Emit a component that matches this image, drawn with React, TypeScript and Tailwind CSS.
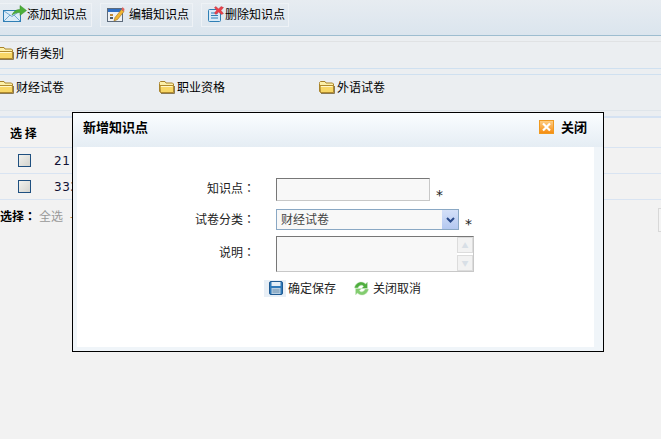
const cjk = "font-['Noto_Sans_CJK_SC',sans-serif]";
const colon = "font-['Noto_Sans_CJK_TC',sans-serif]";
const star = "ml-[6px] font-['DejaVu_Sans',sans-serif] text-[14px]";

const Folder = () => (
  <svg width="16" height="14" viewBox="0 0 16 14" className="mr-[2px] shrink-0">
    <path d="M0.5 3.5V2.5L1.5 1.5H6L7 3H13.5L14.5 4V12.5H1.5L0.5 11.5Z" fill="#fdf0a8" stroke="#a9832a" />
    <path d="M1 5.5H14.5V12.5H1.5Z" fill="#f8d766" stroke="#b08a2e" />
    <path d="M2 6.5H13.5" stroke="#fff6c8" />
    <path d="M2 13.5H15.5V6" fill="none" stroke="#8a7a55" />
  </svg>
);

const AddIcon = () => (
  <svg width="24" height="18" viewBox="0 0 24 18" className="shrink-0">
    <rect x="0.5" y="5.5" width="17" height="11" fill="#dcecf8" stroke="#2f7fb5" />
    <path d="M1 6L9 11.5L17 6M1 16L7 10M17 16L11 10" fill="none" stroke="#6fa8d0" />
    <path d="M9 10C11 5.5 14 4.5 17 4.5V0.5L23.5 5.5L17 10.5V7.5C14 7.5 12 8 9 10Z" fill="#4caf3a" stroke="#3a8f2c" strokeWidth="0.5" />
  </svg>
);

const EditIcon = () => (
  <svg width="18" height="17" viewBox="0 0 18 17" className="shrink-0">
    <rect x="0.5" y="2.5" width="15" height="13" fill="#eef1f4" stroke="#5d6b7c" />
    <rect x="1" y="3" width="14" height="3" fill="#2f6fc4" />
    <rect x="3" y="8" width="3" height="2" fill="#c08a3a" />
    <rect x="3" y="11" width="3" height="2" fill="#4a5a6a" />
    <path d="M7 15L8 11.5L14.5 3.5L17 5.5L10.5 13.5Z" fill="#f2b632" stroke="#9a6f1e" strokeWidth="0.6" />
    <path d="M14.5 3.5L15.5 1L17.5 3L17 5.5Z" fill="#e0645c" />
  </svg>
);

const DeleteIcon = () => (
  <svg width="17" height="17" viewBox="0 0 17 17" className="shrink-0">
    <rect x="0.5" y="3.5" width="12" height="12" rx="1" fill="#d8ebf8" stroke="#2f7fb5" />
    <path d="M3 7H10M3 9.5H10M3 12H10" stroke="#2f7fb5" />
    <path d="M6.5 1.5L8 0.5L10.5 3L13 0.5L15.5 1.5L13 4.5L15.5 7.5L13.5 8.5L10.5 6L8 8.5L6.5 7L8.5 4.5Z" fill="#e8404a" stroke="#b82a34" strokeWidth="0.4" />
  </svg>
);

const CloseIcon = () => (
  <svg width="15" height="14" viewBox="0 0 15 14" className="shrink-0">
    <defs>
      <linearGradient id="closeBg" x1="0" y1="0" x2="0" y2="1">
        <stop offset="0" stopColor="#ffd089" />
        <stop offset="1" stopColor="#f58a0c" />
      </linearGradient>
    </defs>
    <rect x="0.5" y="0.5" width="14" height="13" fill="url(#closeBg)" stroke="#f09a20" />
    <path d="M4 3.5L11 10.5M11 3.5L4 10.5" stroke="#fff" strokeWidth="2.2" />
  </svg>
);

const SaveIcon = () => (
  <svg width="14" height="14" viewBox="0 0 14 14" className="shrink-0">
    <rect x="0.5" y="0.5" width="13" height="13" rx="1.5" fill="#2f79b9" stroke="#1f5a92" />
    <rect x="2.5" y="1" width="9" height="4" fill="#e4eef6" />
    <rect x="2.5" y="7" width="9" height="6" fill="#b8cfe2" />
    <path d="M3.5 9H10.5M3.5 11H10.5" stroke="#6d8fae" />
  </svg>
);

const RefreshIcon = () => (
  <svg width="15" height="15" viewBox="0 0 15 15" className="shrink-0">
    <path d="M0.5 7C1 3 4.5 0.5 8 1C9.5 1.2 10.7 2 11.5 3L13.5 1V7.5H7.5L9.5 5.2C8 3.5 5 4 4 7Z" fill="#4fae3e" stroke="#cfe8c8" strokeWidth="0.5" />
    <path d="M14.5 8C14 12 10.5 14.5 7 14C5.5 13.8 4.3 13 3.5 12L1.5 14V7.5H7.5L5.5 9.8C7 11.5 10 11 11 8Z" fill="#82cc6e" stroke="#cfe8c8" strokeWidth="0.5" />
  </svg>
);

const Tool = ({ icon, label, className }: { icon: React.ReactNode; label: string; className: string }) => (
  <div className={`flex h-[24px] items-center border border-[#eef2f6] pb-[2px] ${className}`}>
    {icon}
    <span>{label}</span>
  </div>
);

const Category = ({ label, className }: { label: string; className?: string }) => (
  <div className={`flex items-center ${className ?? ""}`}>
    <Folder />
    <span>{label}</span>
  </div>
);

const Checkbox = () => (
  <span className="block size-[13px] border border-[#1f5080] bg-gradient-to-br from-[#f2f2ee] to-[#d4d4ce]" />
);

const Row = ({ value }: { value: string }) => (
  <div className="flex h-[26px] items-center border-b border-[#d9e4f2] pl-[18px]">
    <Checkbox />
    <span className="ml-[23px] font-['DejaVu_Sans',sans-serif] text-[12px] tracking-[0.5px] text-[#111133]">{value}</span>
  </div>
);

const Dialog = () => (
  <div className="absolute left-[72px] top-[112px] flex h-[240px] w-[532px] flex-col border border-black bg-[#f0f5f9]">
    <div className="flex h-[34px] shrink-0 items-center justify-between bg-gradient-to-b from-[#fafdff] to-[#e5edf4] pb-[7px] pl-[10px] pr-[16px] text-[13px] font-bold">
      <span>新增知识点</span>
      <div className="flex items-center gap-[7px]">
        <CloseIcon />
        <span>关闭</span>
      </div>
    </div>
    <div className="mb-[4px] ml-[4px] mr-[9px] flex-1 bg-white pt-[31px]">
      <div className="grid grid-cols-[178px_1fr] items-start gap-x-[21px] text-[#222]">
        <span className="h-[23px] text-right leading-[20px]">
          知识点<span className={colon}>：</span>
        </span>
        <div className="flex h-[23px] items-end">
          <div className="h-[23px] w-[154px] border border-[#c8c8c8] border-l-[#777] border-t-[#777] bg-[#f8f8f8]" />
          <span className={`${star} leading-[12px]`}>*</span>
        </div>
        <span className="mt-[8px] text-right leading-[19px]">
          试卷分类<span className={colon}>：</span>
        </span>
        <div className="mt-[8px] flex items-end">
          <div className="flex h-[21px] w-[183px] items-center justify-between border border-[#8aa8c4] bg-[#f8f8f8] pl-[4px] text-[#444]">
            <span className="pb-[1px]">财经试卷</span>
            <span className="flex h-[19px] w-[16px] items-center justify-center bg-gradient-to-b from-[#d4e0f8] to-[#b4c8f0]">
              <svg width="9" height="6" viewBox="0 0 9 6">
                <path d="M1 1L4.5 4.5L8 1" fill="none" stroke="#2a4a8a" strokeWidth="2" />
              </svg>
            </span>
          </div>
          <span className={`${star} leading-[12px]`}>*</span>
        </div>
        <span className="mt-[6px] pt-[6px] text-right leading-[20px]">
          说明<span className={colon}>：</span>
        </span>
        <div className="mt-[6px] flex h-[36px] w-[198px] justify-end border border-[#c8c8c8] border-l-[#777] border-t-[#777] bg-[#f8f8f8]">
          <div className="flex w-[16px] flex-col justify-between bg-white">
            <span className="flex h-[16px] items-center justify-center border border-[#dcdcdc] bg-[#f2f2f2] text-[7px] leading-none text-[#d8dfe6]">▲</span>
            <span className="flex h-[16px] items-center justify-center border border-[#dcdcdc] bg-[#f2f2f2] text-[7px] leading-none text-[#d8dfe6]">▼</span>
          </div>
        </div>
      </div>
      <div className="mt-[7px] flex items-center pl-[187px] text-[#222]">
        <span className="flex h-[17px] w-[22px] items-center justify-end bg-[#e8eff6] pr-[3px]">
          <SaveIcon />
        </span>
        <span className="ml-[2px]">确定保存</span>
        <span className="ml-[18px]">
          <RefreshIcon />
        </span>
        <span className="ml-[4px]">关闭取消</span>
      </div>
    </div>
  </div>
);

export default function App() {
  return (
    <div className={`relative h-[439px] w-[661px] overflow-hidden bg-[#f2f2f2] text-[12px] text-black ${cjk}`}>
      <div className="flex h-[36px] items-start gap-[8px] border-b border-[#9dbdd0] bg-gradient-to-b from-[#e7ecf1] to-[#dbe5ee] pt-[3px]">
        <Tool icon={<AddIcon />} label="添加知识点" className="w-[92px] border-l-0 pl-[3px]" />
        <Tool icon={<EditIcon />} label="编辑知识点" className="w-[93px] gap-[4px] pl-[6px]" />
        <Tool icon={<DeleteIcon />} label="删除知识点" className="w-[88px] pl-[6px]" />
      </div>
      <div className="h-[74px] bg-[#ebeef1] pt-[5px]">
        <div className="h-[28px] border-y border-t-[#e0e2e4] border-b-[#cfe0f0] pt-[2px]">
          <Category label="所有类别" className="-ml-[2px]" />
        </div>
        <div className="mt-[5px] flex h-[36px] border-t border-[#cfe0f0] pt-[2px]">
          <Category label="财经试卷" className="-ml-[2px] h-[20px] w-[161px]" />
          <Category label="职业资格" className="h-[20px] w-[160px]" />
          <Category label="外语试卷" className="h-[20px]" />
        </div>
      </div>
      <div className="h-[6px] border-t border-[#dfe5ea] bg-[#ebeef1]" />
      <div className="h-[2px] bg-[#d5e2f2]" />
      <div className="flex h-[30px] items-center border-b border-[#d9e4f2] pl-[10px] font-bold">选 择</div>
      <Row value="21" />
      <Row value="333" />
      <div className="flex h-[34px] items-center justify-between">
        <div className="flex items-center pb-[2px]">
          <span className="font-bold">
            选择<span className={colon}>：</span>
          </span>
          <span className="ml-[3px] text-[#999]">全选</span>
          <span className="ml-[7px] text-[#c08040]">-</span>
        </div>
        <div className="mt-[8px] h-[24px] w-[3px] self-start border border-r-0 border-[#d8d8d8] bg-[#f4f4f4]" />
      </div>
      <Dialog />
    </div>
  );
}
